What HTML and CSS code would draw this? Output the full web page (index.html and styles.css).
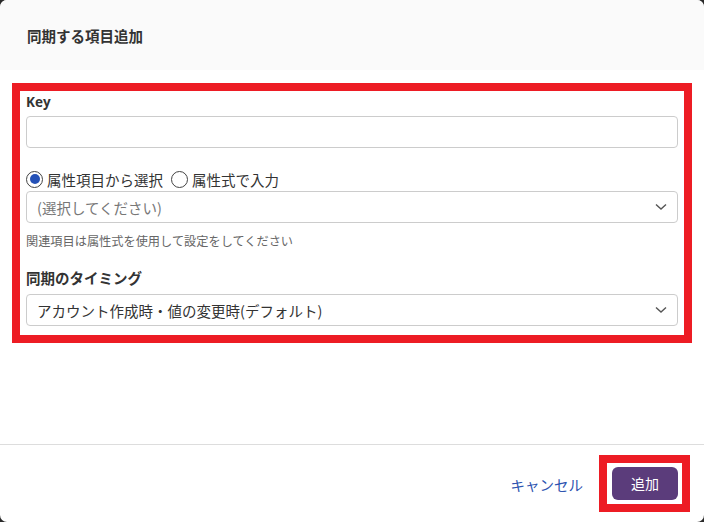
FILE: index.html
```html
<!DOCTYPE html>
<html lang="ja">
<head>
<meta charset="utf-8">
<title>同期する項目追加</title>
<link rel="stylesheet" href="styles.css">
</head>
<body>
<div class="modal">
  <div class="modal-header">
    <h1 class="modal-title">同期する項目追加</h1>
  </div>
  <div class="modal-body">
    <div class="highlight form-area">
      <label class="field-label latin">Key</label>
      <div class="input"></div>

      <div class="radio-row">
        <label class="radio"><span class="radio-dot checked"></span>属性項目から選択</label>
        <label class="radio"><span class="radio-dot"></span>属性式で入力</label>
      </div>
      <div class="select placeholder">
        <span>(選択してください)</span>
        <svg class="chev" width="12" height="8" viewBox="0 0 12 8"><path d="M1 1.5 L6 6 L11 1.5" fill="none" stroke="#555" stroke-width="1.4"/></svg>
      </div>
      <p class="help">関連項目は属性式を使用して設定をしてください</p>

      <label class="field-label timing">同期のタイミング</label>
      <div class="select">
        <span>アカウント作成時・値の変更時(デフォルト)</span>
        <svg class="chev" width="12" height="8" viewBox="0 0 12 8"><path d="M1 1.5 L6 6 L11 1.5" fill="none" stroke="#555" stroke-width="1.4"/></svg>
      </div>
    </div>
  </div>
  <div class="modal-footer">
    <a class="cancel">キャンセル</a>
    <div class="highlight btn-wrap">
      <button class="btn-primary">追加</button>
    </div>
  </div>
</div>
</body>
</html>
```

FILE: styles.css
```css
* { box-sizing: border-box; }
html, body { margin: 0; padding: 0; }
body {
  background: #2a2a2a;
  font-family: "Open Sans", "Noto Sans CJK JP", sans-serif;
  color: #333;
}
.modal {
  width: 704px;
  height: 522px;
  background: #fff;
  border-radius: 7px;
  overflow: hidden;
  display: flex;
  flex-direction: column;
}
.modal-header {
  height: 70px;
  background: #fafafa;
  display: flex;
  align-items: center;
  padding-left: 27px;
}
.modal-title {
  margin: 0;
  font-size: 14.5px;
  font-weight: 700;
  color: #333;
  font-family: "Noto Sans CJK JP", sans-serif;
}
.modal-body {
  flex: 1;
  padding: 13px 12px 0 12px;
}
.highlight { border: 8px solid #ed1c24; }
.form-area {
  padding: 2px 6px 9px 6px;
  display: flex;
  flex-direction: column;
}
.field-label {
  display: block;
  font-weight: 700;
  font-size: 13.5px;
  line-height: 18px;
  margin-bottom: 5px;
  color: #333;
}
.field-label.latin { font-family: "Open Sans", sans-serif; }
.field-label.timing {
  font-family: "Noto Sans CJK JP", sans-serif;
  font-size: 14.5px;
  line-height: 20px;
  margin-top: 18px;
  margin-bottom: 6px;
}
.input {
  height: 32px;
  border: 1px solid #ccc;
  border-radius: 4px;
  background: #fff;
}
.radio-row {
  display: flex;
  align-items: center;
  gap: 8px;
  margin-top: 20px;
  height: 22px;
  margin-bottom: 1px;
  font-family: "Noto Sans CJK JP", sans-serif;
  font-size: 14.5px;
  color: #333;
}
.radio { display: flex; align-items: center; gap: 4px; }
.radio-dot {
  width: 17px;
  height: 17px;
  border-radius: 50%;
  border: 1.5px solid #444;
  display: inline-flex;
  align-items: center;
  justify-content: center;
  background: #fff;
}
.radio-dot.checked::after {
  content: "";
  width: 10px;
  height: 10px;
  border-radius: 50%;
  background: #2451b7;
}
.select {
  height: 32px;
  border: 1px solid #ccc;
  border-radius: 4px;
  background: #fff;
  display: flex;
  align-items: center;
  justify-content: space-between;
  padding: 0 10px 0 10px;
  font-family: "Noto Sans CJK JP", sans-serif;
  font-size: 14.5px;
  color: #333;
}
.select.placeholder { color: #777; }
.chev { display: block; }
.help {
  margin: 9px 0 0 0;
  font-family: "Noto Sans CJK JP", sans-serif;
  font-size: 12.2px;
  line-height: 18px;
  color: #666;
}
.modal-footer {
  height: 78px;
  border-top: 1px solid #ddd;
  display: flex;
  align-items: center;
  justify-content: flex-end;
  padding: 9px 14px 10px 0;
}
.cancel {
  font-family: "Noto Sans CJK JP", sans-serif;
  font-size: 14.5px;
  color: #2e54b0;
  margin-right: 16px;
  margin-top: 2px;
}
.btn-wrap {
  padding: 4px 4px 4px 5px;
  display: flex;
}
.btn-primary {
  width: 66px;
  height: 33px;
  border: none;
  border-radius: 6px;
  background: #5b3c7b;
  color: #fff;
  font-family: "Noto Sans CJK JP", sans-serif;
  font-size: 14px;
  padding: 0;
}
```
